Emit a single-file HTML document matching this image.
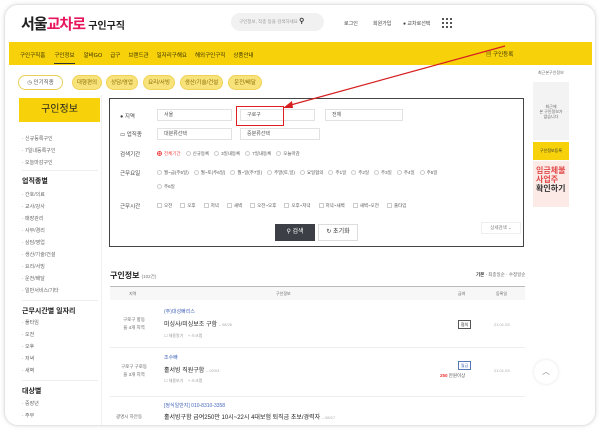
<!DOCTYPE html>
<html><head><meta charset="utf-8"><style>
*{margin:0;padding:0;box-sizing:border-box}
body{width:600px;height:430px;background:#fff;font-family:"Liberation Sans","Noto Sans CJK KR",sans-serif;color:#333;position:relative;overflow:hidden}
.a{position:absolute;white-space:nowrap}
.s{font-size:5px;color:#666}
.t{font-size:6px;color:#444}
.chip{position:absolute;height:15px;border-radius:8px;background:#f8e27a;font-size:5.5px;color:#8a6d00;line-height:15px;text-align:center;border:1px solid #f0d257}
.sel{position:absolute;height:12px;border:1px solid #e2e2e2;font-size:5px;line-height:10px;padding-left:6px;color:#555;background:#fff}
.cb{display:inline-block;width:5px;height:5px;border:1px solid #ccc;margin-right:2px;vertical-align:middle}
.rd{display:inline-block;width:5px;height:5px;border:1px solid #ccc;border-radius:50%;margin-right:2px;vertical-align:middle}
.opt{font-size:4.5px;color:#555;margin-right:5px;vertical-align:middle}
.row{line-height:7px;font-size:4.5px}
</style></head><body>
<div class="a" style="left:4px;top:4px;width:592px;height:422px;border:1px solid #e4e4e4;border-radius:14px;box-shadow:0 0 4px rgba(0,0,0,.12)"></div>

<div class="a" style="left:21px;top:13px;font-size:15px;font-weight:bold;color:#222;letter-spacing:-1px">서울<span style="color:#e8175d">교차로</span> <span style="font-size:10px;letter-spacing:0">구인구직</span></div>
<div class="a" style="left:231px;top:13px;width:93px;height:18px;border-radius:9px;background:#f1f1f1;font-size:4.5px;color:#999;line-height:18px;padding-left:8px">구인정보, 직종 등을 검색하세요 <b style="color:#333;font-size:7px">⚲</b></div>
<div class="a t" style="left:344px;top:20px;font-size:5px">로그인</div>
<div class="a t" style="left:373px;top:20px;font-size:5px">회원가입</div>
<div class="a t" style="left:403px;top:20px;font-size:5px">● 교차로선택</div>
<svg class="a" style="left:442px;top:18px" width="10" height="10"><g fill="#555"><rect x="0" y="0" width="2" height="2"/><rect x="4" y="0" width="2" height="2"/><rect x="8" y="0" width="2" height="2"/><rect x="0" y="4" width="2" height="2"/><rect x="4" y="4" width="2" height="2"/><rect x="8" y="4" width="2" height="2"/><rect x="0" y="8" width="2" height="2"/><rect x="4" y="8" width="2" height="2"/><rect x="8" y="8" width="2" height="2"/></g></svg>

<div class="a" style="left:9px;top:42px;width:583px;height:23px;background:#f7d20a"></div>
<div class="a" style="left:20px;top:51px;font-size:5.5px;color:#3a3000">
<span style="margin-right:9px">구인구직홈</span><span style="margin-right:9px;border-bottom:1.5px solid #333;padding-bottom:4px">구인정보</span><span style="margin-right:8px">알바GO</span><span style="margin-right:8px">급구</span><span style="margin-right:8px">브랜드관</span><span style="margin-right:8px">일자리구해요</span><span style="margin-right:8px">해외구인구직</span><span>상품안내</span></div>
<div class="a" style="left:486px;top:50px;font-size:5.5px;color:#3a3000">▤ 구인등록</div>

<div class="chip" style="left:18px;top:75px;width:45px;background:#fff;border-color:#e9cf5a;color:#555">◷ 인기직종</div>
<div class="chip" style="left:72px;top:75px;width:30px">대형편의</div>
<div class="chip" style="left:106px;top:75px;width:32px">상담/영업</div>
<div class="chip" style="left:143px;top:75px;width:32px">요리/서빙</div>
<div class="chip" style="left:180px;top:75px;width:43px">생산/기술/건설</div>
<div class="chip" style="left:228px;top:75px;width:34px">운전/배달</div>

<div class="a s" style="left:538px;top:70px;font-size:4px">최근본구인정보</div>
<div class="a" style="left:533px;top:82px;width:36px;height:58px;background:#f3f3f3"></div>
<div class="a s" style="left:536px;top:104px;width:30px;text-align:center;white-space:normal;font-size:4px;line-height:5px">최근에<br>본 구인정보가<br>없습니다</div>
<div class="a" style="left:533px;top:142px;width:36px;height:18px;background:#f7d20a;font-size:4px;text-align:center;line-height:18px;color:#333">구인정보등록</div>
<div class="a" style="left:533px;top:161px;width:36px;height:46px;background:#fbeae6"></div>
<div class="a" style="left:536px;top:166px;font-size:8px;line-height:9px;color:#e24a4a;font-weight:bold">임금체불<br>사업주<br><span style="color:#333">확인하기</span></div>

<div class="a" style="left:19px;top:98px;width:81px;height:24px;background:#f7d20a;font-size:10px;text-align:center;line-height:24px;color:#222">구인정보</div>
<div class="a s" style="left:22px;top:133px;line-height:12px;font-size:5px">· 신규등록구인<br>· 7일내등록구인<br>· 오늘마감구인</div>
<div class="a" style="left:22px;top:170px;width:76px;border-top:1px solid #eee"></div>
<div class="a" style="left:22px;top:176px;font-size:7px;font-weight:bold;color:#222">업직종별</div>
<div class="a s" style="left:22px;top:189px;line-height:12px;font-size:5px">· 간호/의료<br>· 교사/강사<br>· 매장관리<br>· 사무/경리<br>· 상담/영업<br>· 생산/기술/건설<br>· 요리/서빙<br>· 운전/배달<br>· 일반서비스/기타</div>
<div class="a" style="left:22px;top:300px;width:76px;border-top:1px solid #eee"></div>
<div class="a" style="left:22px;top:306px;font-size:7px;font-weight:bold;color:#222">근무시간별 일자리</div>
<div class="a s" style="left:22px;top:317px;line-height:12px;font-size:5px">· 풀타임<br>· 오전<br>· 오후<br>· 저녁<br>· 새벽</div>
<div class="a" style="left:22px;top:380px;width:76px;border-top:1px solid #eee"></div>
<div class="a" style="left:22px;top:386px;font-size:7px;font-weight:bold;color:#222">대상별</div>
<div class="a s" style="left:22px;top:398px;line-height:12px;font-size:5px">· 중장년<br>· 주부</div>
<div class="a" style="left:101px;top:95px;height:330px;border-left:1px solid #f0f0f0"></div>

<div class="a" style="left:109px;top:98px;width:415px;height:149px;border:1px solid #444"></div>
<div class="a t" style="left:120px;top:112px;font-size:5.5px">● 지역</div>
<div class="sel" style="left:157px;top:109px;width:75px">서울</div>
<div class="sel" style="left:240px;top:109px;width:75px">구로구</div>
<div class="sel" style="left:325px;top:109px;width:78px">전체</div>
<div class="a" style="left:236px;top:106px;width:48px;height:20px;border:1.5px solid #e02020"></div>
<div class="a t" style="left:120px;top:130px;font-size:5.5px">▭ 업직종</div>
<div class="sel" style="left:157px;top:128px;width:75px">대분류선택</div>
<div class="sel" style="left:240px;top:128px;width:80px">중분류선택</div>
<div class="a t" style="left:120px;top:150px;font-size:5.5px">검색기간</div>
<div class="a row" style="left:157px;top:150px"><span class="rd" style="border-color:#e44;background:radial-gradient(#e44 40%,#fff 50%)"></span><span class="opt" style="color:#e44">전체기간</span><span class="rd"></span><span class="opt">신규등록</span><span class="rd"></span><span class="opt">3일내등록</span><span class="rd"></span><span class="opt">7일내등록</span><span class="rd"></span><span class="opt">오늘마감</span></div>
<div class="a t" style="left:120px;top:169px;font-size:5.5px">근무요일</div>
<div class="a row" style="left:157px;top:169px"><span class="rd"></span><span class="opt">월~금(주5일)</span><span class="rd"></span><span class="opt">월~토(주6일)</span><span class="rd"></span><span class="opt">월~일(주7일)</span><span class="rd"></span><span class="opt">주말(토,일)</span><span class="rd"></span><span class="opt">요일협의</span><span class="rd"></span><span class="opt">주1일</span><span class="rd"></span><span class="opt">주2일</span><span class="rd"></span><span class="opt">주3일</span><span class="rd"></span><span class="opt">주4일</span><span class="rd"></span><span class="opt">주5일</span></div>
<div class="a row" style="left:157px;top:183px"><span class="rd"></span><span class="opt">주6일</span></div>
<div class="a t" style="left:120px;top:202px;font-size:5.5px">근무시간</div>
<div class="a row" style="left:157px;top:202px"><span class="cb"></span><span class="opt" style="margin-right:8px">오전</span><span class="cb"></span><span class="opt" style="margin-right:8px">오후</span><span class="cb"></span><span class="opt" style="margin-right:8px">저녁</span><span class="cb"></span><span class="opt" style="margin-right:8px">새벽</span><span class="cb"></span><span class="opt" style="margin-right:8px">오전~오후</span><span class="cb"></span><span class="opt" style="margin-right:8px">오후~저녁</span><span class="cb"></span><span class="opt" style="margin-right:8px">저녁~새벽</span><span class="cb"></span><span class="opt" style="margin-right:8px">새벽~오전</span><span class="cb"></span><span class="opt">풀타임</span></div>
<div class="a" style="left:275px;top:224px;width:40px;height:17px;background:#3c4046;color:#fff;font-size:6px;text-align:center;line-height:17px">⚲ 검색</div>
<div class="a" style="left:318px;top:224px;width:40px;height:17px;border:1px solid #ddd;color:#333;font-size:6px;text-align:center;line-height:15px">↻ 초기화</div>
<div class="a" style="left:481px;top:222px;width:40px;height:12px;border:1px solid #eee;color:#777;font-size:4.5px;text-align:center;line-height:10px">상세검색 ⌄</div>

<div class="a" style="left:110px;top:270px;font-size:8px;font-weight:bold;color:#222">구인정보 <span style="font-size:4.5px;font-weight:normal;color:#777">(102건)</span></div>
<div class="a s" style="left:476px;top:272px;font-size:4.5px"><b style="color:#333">기본</b> · 최종일순 · 수정일순</div>
<div class="a" style="left:110px;top:286px;width:415px;height:14px;background:#f7f7f7;border-top:1.5px solid #bbb"></div>
<div class="a s" style="left:129px;top:291px;font-size:4px">지역</div>
<div class="a s" style="left:276px;top:291px;font-size:4px">구인정보</div>
<div class="a s" style="left:458px;top:291px;font-size:4px">급여</div>
<div class="a s" style="left:496px;top:291px;font-size:4px">등록일</div>

<div class="a s" style="left:114px;top:316px;width:40px;text-align:center;line-height:8px;font-size:4.5px">구로구 항동<br>을 4개 지역</div>
<div class="a" style="left:164px;top:308px;font-size:5px;color:#4466bb">(주)대성빠리스</div>
<div class="a" style="left:164px;top:319px;font-size:6px;color:#222">미싱사/미싱보조 구함 <span style="font-size:4px;color:#aaa">– 08/26</span></div>
<div class="a s" style="left:164px;top:333px;font-size:4px;color:#999">☐ 채용알기 &nbsp;&nbsp; + 스크랩</div>
<div class="a" style="left:458px;top:320px;width:13px;height:9px;border:1px solid #555;font-size:4px;text-align:center;line-height:7px">협의</div>
<div class="a s" style="left:494px;top:322px;font-size:4px;color:#aaa">21.01.03</div>
<div class="a" style="left:110px;top:347px;width:415px;border-top:1px solid #eee"></div>

<div class="a s" style="left:114px;top:363px;width:40px;text-align:center;line-height:8px;font-size:4.5px">구로구 구로동<br>을 3개 지역</div>
<div class="a" style="left:164px;top:354px;font-size:5px;color:#4466bb">조수빠</div>
<div class="a" style="left:164px;top:365px;font-size:6px;color:#222">홀서빙 직원구함 <span style="font-size:4px;color:#aaa">– 02/03</span></div>
<div class="a s" style="left:164px;top:378px;font-size:4px;color:#999">☐ 채용보기 &nbsp;&nbsp; + 스크랩</div>
<div class="a" style="left:458px;top:361px;width:13px;height:9px;border:1px solid #5577bb;color:#5577bb;font-size:4px;text-align:center;line-height:7px">월급</div>
<div class="a" style="left:440px;top:373px;font-size:4.5px;color:#555"><b style="color:#e33">250</b> 만원이상</div>
<div class="a s" style="left:494px;top:368px;font-size:4px;color:#aaa">21.01.03</div>
<div class="a" style="left:110px;top:396px;width:415px;border-top:1px solid #eee"></div>

<div class="a" style="left:164px;top:402px;font-size:5px;color:#4466bb">[정식일반지] 010-8310-3358</div>
<div class="a s" style="left:116px;top:414px;font-size:4.5px">광명시 하안동</div>
<div class="a" style="left:164px;top:412px;font-size:6px;color:#222">홀서빙구함 급여250만 10시~22시 4대보험 퇴직금 초보/경력자 <span style="font-size:4px;color:#aaa">– 08/17</span></div>

<div class="a" style="left:534px;top:360px;width:24px;height:24px;border-radius:50%;background:#fff;box-shadow:0 0 3px rgba(0,0,0,.12);font-size:8px;color:#888;text-align:center;line-height:24px">︿</div>

<svg class="a" style="left:0;top:0" width="600" height="430"><line x1="505" y1="46" x2="287" y2="106" stroke="#d62020" stroke-width="1.2"/><polygon points="283,108 292,101 293,108" fill="#d62020"/></svg>
</body></html>
